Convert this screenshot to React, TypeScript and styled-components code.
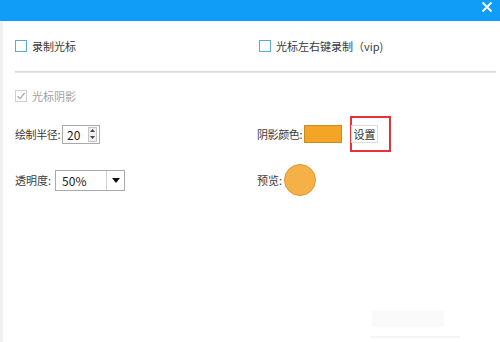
import React from 'react';
import styled, {createGlobalStyle} from 'styled-components';

const GlobalStyle = createGlobalStyle`
  html, body {
    margin: 0;
    padding: 0;
    background: #ffffff;
  }
  body {
    font-family: 'Noto Sans CJK SC', 'Noto Sans', sans-serif;
    font-size: 11px;
    color: #3a3a3a;
  }
`;

const Window = styled.div`
  width: 500px;
  height: 342px;
  display: flex;
  flex-direction: column;
  overflow: hidden;
  background: #ffffff;
`;

const TitleBar = styled.div`
  height: 21px;
  flex-shrink: 0;
  background: #0f9df7;
  display: flex;
  justify-content: flex-end;
  align-items: flex-start;
  padding-right: 7px;
`;

const CloseButton = styled.div`
  width: 12px;
  height: 12px;
  margin-top: 1px;
  display: flex;
  color: #ffffff;
`;

const Body = styled.div`
  flex: 1;
  display: flex;
  flex-direction: column;
  border-left: 3px solid #f1f1f1;
  padding: 0 4px 0 12px;
  position: relative;
`;

const Row = styled.div<{height: number}>`
  height: ${p => p.height}px;
  display: grid;
  grid-template-columns: 242px 1fr;
  align-items: center;
`;

const Cell = styled.div<{shift?: number}>`
  display: flex;
  align-items: center;
  margin-left: ${p => p.shift ?? 0}px;
`;

const Box = styled.span<{disabled?: boolean}>`
  width: 12px;
  height: 12px;
  box-sizing: border-box;
  border: 1px solid ${p => (p.disabled ? '#cfcfcf' : '#5aa9dc')};
  background: #ffffff;
  display: flex;
  align-items: center;
  justify-content: center;
  margin-right: 5px;
`;

const Label = styled.span<{muted?: boolean; tight?: boolean}>`
  color: ${p => (p.muted ? '#a0a0a0' : '#3a3a3a')};
  line-height: 12px;
  white-space: nowrap;
  letter-spacing: ${p => (p.tight ? '-0.4px' : '0')};
`;

const Separator = styled.div`
  height: 2px;
  background: linear-gradient(#d6d6d6, #e8e8e8);
`;

const SpinBox = styled.div`
  width: 38px;
  height: 19px;
  box-sizing: border-box;
  border: 1px solid #a9a9a9;
  display: flex;
  align-items: center;
  justify-content: space-between;
  padding: 0 2px 0 4px;
  background: #ffffff;
  font-size: 12px;
  color: #222222;
  margin-left: 2px;
`;

const SpinButtons = styled.div`
  width: 9px;
  height: 15px;
  display: flex;
  flex-direction: column;
  border: 1px solid #c4c4c4;
  box-sizing: border-box;
  background: #efefef;
`;

const SpinHalf = styled.div`
  flex: 1;
  display: flex;
  align-items: center;
  justify-content: center;
`;

const Select = styled.div`
  width: 70px;
  height: 21px;
  box-sizing: border-box;
  border: 1px solid #a9a9a9;
  display: flex;
  align-items: stretch;
  background: #ffffff;
  margin-left: 4px;
  font-size: 12px;
  color: #222222;
`;

const SelectValue = styled.div`
  flex: 1;
  display: flex;
  align-items: center;
  padding-left: 6px;
`;

const SelectArrow = styled.div`
  width: 17px;
  border-left: 1px solid #cfcfcf;
  display: flex;
  align-items: center;
  justify-content: center;
`;

const Swatch = styled.div<{color: string}>`
  width: 38px;
  height: 18px;
  box-sizing: border-box;
  border: 1px solid #c88a22;
  background: ${p => p.color};
  margin-left: 2px;
`;

const Highlight = styled.div`
  margin-left: 8px;
  width: 41px;
  height: 36px;
  box-sizing: border-box;
  border: 2px solid #e8323b;
  display: flex;
  align-items: center;
`;

const SetButton = styled.div`
  width: 27px;
  height: 18px;
  margin-left: -1px;
  box-sizing: border-box;
  border: 1px solid #dcdcdc;
  display: flex;
  align-items: center;
  justify-content: center;
  background: #ffffff;
  font-size: 11px;
  color: #333333;
`;

const Preview = styled.div<{color: string}>`
  width: 32px;
  height: 32px;
  border-radius: 50%;
  box-sizing: border-box;
  border: 1px solid #d99a3a;
  background: ${p => p.color};
  margin-left: 2px;
`;

const GhostButton = styled.div`
  position: absolute;
  left: 369px;
  top: 290px;
  width: 72px;
  height: 16px;
  background: #fafafa;
`;

const GhostLine = styled.div`
  position: absolute;
  left: 367px;
  top: 315px;
  width: 90px;
  height: 2px;
  background: #f4f4f4;
`;

const Check = () => (
  <svg width="10" height="10" viewBox="0 0 10 10">
    <path d="M1.5 5.2 L4 7.6 L8.6 2" fill="none" stroke="#a8a8a8" strokeWidth="1.3" />
  </svg>
);

export default function App() {
  return (
    <>
      <GlobalStyle />
      <Window>
        <TitleBar>
          <CloseButton>
            <svg width="12" height="12" viewBox="0 0 12 12">
              <path d="M1.5 1.5 L10.5 10.5 M10.5 1.5 L1.5 10.5" stroke="#ffffff" strokeWidth="1.8" />
            </svg>
          </CloseButton>
        </TitleBar>
        <Body>
          <Row height={19} />
          <Row height={12}>
            <Cell>
              <Box />
              <Label>录制光标</Label>
            </Cell>
            <Cell shift={2}>
              <Box />
              <Label>光标左右键录制（vip)</Label>
            </Cell>
          </Row>
          <Row height={19} />
          <Separator />
          <Row height={17} />
          <Row height={12}>
            <Cell>
              <Box disabled>
                <Check />
              </Box>
              <Label muted>光标阴影</Label>
            </Cell>
          </Row>
          <Row height={14} />
          <Row height={36}>
            <Cell>
              <Label tight>绘制半径:</Label>
              <SpinBox>
                <span>20</span>
                <SpinButtons>
                  <SpinHalf>
                    <svg width="5" height="3" viewBox="0 0 5 3">
                      <path d="M0 3 L2.5 0 L5 3 Z" fill="#444" />
                    </svg>
                  </SpinHalf>
                  <SpinHalf>
                    <svg width="5" height="3" viewBox="0 0 5 3">
                      <path d="M0 0 L2.5 3 L5 0 Z" fill="#444" />
                    </svg>
                  </SpinHalf>
                </SpinButtons>
              </SpinBox>
            </Cell>
            <Cell>
              <Label tight>阴影颜色:</Label>
              <Swatch color="#f4a525" />
              <Highlight>
                <SetButton>设置</SetButton>
              </Highlight>
            </Cell>
          </Row>
          <Row height={5} />
          <Row height={46}>
            <Cell>
              <Label>透明度:</Label>
              <Select>
                <SelectValue>50%</SelectValue>
                <SelectArrow>
                  <svg width="8" height="5" viewBox="0 0 8 5">
                    <path d="M0 0 L8 0 L4 5 Z" fill="#111" />
                  </svg>
                </SelectArrow>
              </Select>
            </Cell>
            <Cell>
              <Label>预览:</Label>
              <Preview color="#f5b148" />
            </Cell>
          </Row>
          <GhostButton />
          <GhostLine />
        </Body>
      </Window>
    </>
  );
}
